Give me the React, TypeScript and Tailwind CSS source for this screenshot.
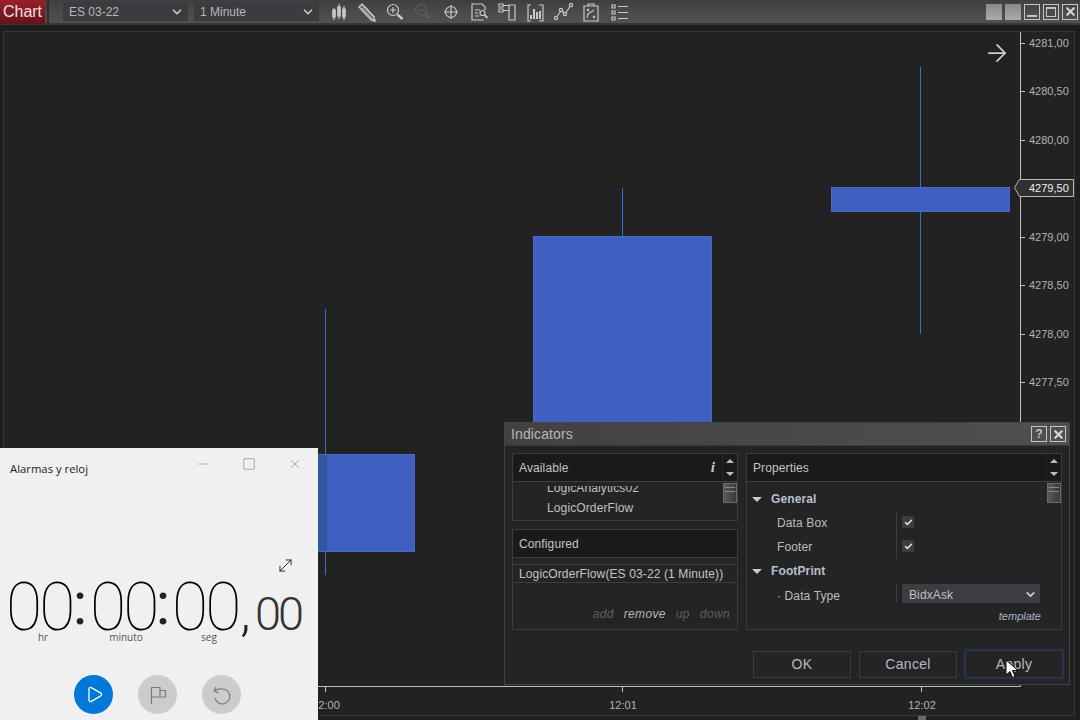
import * as React from "react";
import { ArrowRight, ChevronDown, Check, MoveDiagonal, Minus, Square, X, Play } from "lucide-react";

const prices = [
  { label: "4281,00", y: 43 },
  { label: "4280,50", y: 91 },
  { label: "4280,00", y: 140 },
  { label: "4279,00", y: 237 },
  { label: "4278,50", y: 285 },
  { label: "4278,00", y: 334 },
  { label: "4277,50", y: 382 },
];

const times = [
  { label: "12:00", x: 325 },
  { label: "12:01", x: 622 },
  { label: "12:02", x: 921 },
];

const sans = "font-['Liberation_Sans',Arial,sans-serif]";

function ToolIcon({ children }: { children: React.ReactNode }) {
  return (
    <div className="flex h-[24px] w-[28px] items-center justify-center">
      <svg width="24" height="24" viewBox="0 0 24 24" fill="none" stroke="#c8c8c8" strokeWidth="1.2">
        {children}
      </svg>
    </div>
  );
}

function Toolbar() {
  return (
    <div className="flex h-[25px] shrink-0 items-center border-b-2 border-[#383838] bg-gradient-to-b from-[#3f3f41] via-[#4a4a4a] to-[#505050]">
      <div className="flex h-[24px] w-[45px] items-center justify-center bg-gradient-to-b from-[#98202a] to-[#67121a] text-[16px] text-[#f0e0e0]">
        Chart
      </div>
      <div className="ml-[2px] h-full w-[2px] bg-[#2c2c2c]" />
      <div className="ml-[14px] flex h-[19px] w-[125px] items-center justify-between bg-[#3b3b40] pl-[6px] pr-[4px] text-[12px] text-[#b8b8b8]">
        ES 03-22
        <ChevronDown size={14} strokeWidth={3} className="text-[#c8c8c8]" />
      </div>
      <div className="ml-[6px] flex h-[19px] w-[125px] items-center justify-between bg-[#3b3b40] pl-[6px] pr-[4px] text-[12px] text-[#b8b8b8]">
        1 Minute
        <ChevronDown size={14} strokeWidth={3} className="text-[#c8c8c8]" />
      </div>
      <div className="ml-[6px] flex items-center">
        <ToolIcon>
          <path d="M7 8v12M12 4v15M17 6v14" />
          <path d="M5.800 10h2.400v7H5.800zM10.800 7h2.400v9h-2.400zM15.800 9h2.400v8h-2.400z" fill="#c8c8c8" />
        </ToolIcon>
        <ToolIcon>
          <path d="M7 4l12 13 1 4-4-1L4 7z" fill="#6a6a6a" strokeWidth="1.300" />
          <path d="M7 8l10 11M9.500 6l10 11" stroke="#e0e0e0" strokeWidth="0.800" />
          <path d="M17.500 19.500l2.500 1.500" strokeWidth="2" />
        </ToolIcon>
        <ToolIcon>
          <circle cx="10" cy="10" r="5.500" />
          <path d="M7 10h6M10 7v6" />
          <path d="M14.500 14.500l5 4.500" strokeWidth="2.400" />
        </ToolIcon>
        <ToolIcon>
          <g stroke="#5e5e5e">
            <circle cx="10" cy="10" r="5.500" />
            <path d="M7 10h6" />
            <path d="M14.500 14.500l5 4.500" strokeWidth="2.400" />
          </g>
        </ToolIcon>
        <ToolIcon>
          <circle cx="12" cy="12" r="5.500" />
          <path d="M12 5v14M5 12h14" />
        </ToolIcon>
        <ToolIcon>
          <path d="M18 10V7l-3-3H5v16h12" />
          <path d="M8 10h5M8 13h3M8 16h4" />
          <circle cx="15.500" cy="13" r="2.500" />
          <path d="M17.500 15l3 3" strokeWidth="1.800" />
        </ToolIcon>
        <ToolIcon>
          <path d="M14 5h6v15h-6zM4 4h4v3H4zM4 9h4v3H4zM8 5.500h6M8 10.500h6" />
        </ToolIcon>
        <ToolIcon>
          <path d="M8 5H5v16h3M16 5h4v16h-4" />
          <path d="M8 19v-4M11 19V9M14 19v-7M17 19v-8" strokeWidth="2" />
        </ToolIcon>
        <ToolIcon>
          <circle cx="5" cy="18" r="1.600" />
          <circle cx="10" cy="10" r="1.600" />
          <circle cx="14" cy="14" r="1.600" />
          <circle cx="20" cy="5" r="1.600" />
          <path d="M6 16.500l3.500-5M11 11l2 2M15 12.500l4-6" />
        </ToolIcon>
        <ToolIcon>
          <path d="M5 6h14v15H5zM9 6V4h6v2" />
          <path d="M8 9l2 2M10 9l-2 2M14 16l2 2M16 16l-2 2M8 18c0-4 2-5 7-8" />
        </ToolIcon>
        <ToolIcon>
          <path d="M5 5h3v3H5zM5 11h3v3H5zM5 17h3v3H5zM11 6.500h10M11 12.500h10M11 18.500h10" />
        </ToolIcon>
      </div>
      <div className="ml-auto mr-[2px] flex items-center gap-[3px]">
        <div className="h-[16px] w-[16px] bg-gradient-to-b from-[#8a8a8a] to-[#aaaaaa]" />
        <div className="h-[16px] w-[16px] bg-gradient-to-b from-[#8a8a8a] to-[#aaaaaa]" />
        <div className="flex h-[16px] w-[16px] items-end justify-center border border-[#c4c4c4] pb-[2px]">
          <div className="h-[2px] w-[10px] bg-[#c4c4c4]" />
        </div>
        <div className="flex h-[16px] w-[16px] items-center justify-center border border-[#c4c4c4]">
          <div className="h-[10px] w-[10px] border border-t-2 border-[#c4c4c4]" />
        </div>
        <div className="flex h-[16px] w-[16px] items-center justify-center border border-[#c4c4c4]">
          <X size={13} strokeWidth={4} className="text-[#d4d4d4]" />
        </div>
      </div>
    </div>
  );
}

function ChartLayer() {
  return (
    <div className="absolute inset-0">
      <svg width="1080" height="720" viewBox="0 0 1080 720" className="absolute left-0 top-0" fill="none">
        <path d="M1020.500 32V686.500H318" stroke="#c0c0c0" />
        {prices.map((p) => (
          <path key={p.label} d={`M1020 ${p.y + 0.5}h5`} stroke="#c0c0c0" />
        ))}
        <path d="M1020 188.500h5" stroke="#c0c0c0" />
        {times.map((t) => (
          <path key={t.label} d={`M${t.x + 0.5} 686v6`} stroke="#c0c0c0" />
        ))}
        <path d="M325.500 309V575" stroke="#4068d8" />
        <rect x="236.500" y="454.500" width="178" height="97" fill="#3f60c0" stroke="#4668d0" />
        <rect x="318" y="455" width="9" height="96" fill="#34569f" />
        <path d="M622.500 188V236" stroke="#4068d8" />
        <rect x="533.500" y="236.500" width="178" height="190" fill="#3f60c0" stroke="#4668d0" />
        <path d="M920.500 67V334" stroke="#4068d8" />
        <rect x="831.500" y="187.500" width="178" height="24" fill="#3f60c0" stroke="#4668d0" />
        <path d="M1014.500 187.500l5-8h54v17h-54z" fill="#303030" stroke="#b8b8b8" />
        <rect x="918" y="716" width="8" height="4" fill="#6a6a6a" />
      </svg>
      {prices.map((p) => (
        <span key={p.label} className="absolute left-[1029px] text-[11px] leading-[14px] text-[#b4b4b4]" style={{ top: p.y - 7 }}>
          {p.label}
        </span>
      ))}
      <span className="absolute left-[1029px] top-[181px] text-[11px] leading-[14px] text-[#f0f0f0]">4279,50</span>
      {times.map((t) => (
        <span key={t.label} className="absolute top-[698px] w-[40px] -translate-x-1/2 text-center text-[11px] leading-[14px] text-[#b4b4b4]" style={{ left: t.x + 1 }}>
          {t.label}
        </span>
      ))}
      <ArrowRight size={28} strokeWidth={1.500} className="absolute left-[983px] top-[39px] text-[#d0d0d0]" />
    </div>
  );
}

function ScrollButtons() {
  return (
    <div className="flex h-full w-[15px] flex-col items-center justify-center gap-[9px] border-l border-[#262626]">
      <div className="h-0 w-0 border-x-[4px] border-b-[4px] border-x-transparent border-b-[#bdbdbd]" />
      <div className="h-0 w-0 border-x-[4px] border-t-[4px] border-x-transparent border-t-[#bdbdbd]" />
    </div>
  );
}

function ScrollThumb() {
  return (
    <div className="absolute right-0 top-[1px] flex h-[20px] w-[14px] flex-col gap-[3px] border border-[#6a6a6a] bg-gradient-to-r from-[#5a5a5a] to-[#3a3a3a] px-[1px] pt-[3px]">
      <div className="h-px bg-[#8a8a8a]" />
      <div className="h-px bg-[#8a8a8a]" />
    </div>
  );
}

function PanelHeader({ title, children }: { title: string; children?: React.ReactNode }) {
  return (
    <div className="flex h-[28px] shrink-0 items-center justify-between border-b border-[#3e3e3e] bg-[#1a1a1a] pl-[6px] text-[12px] text-[#c4c4c4]">
      {title}
      {children}
    </div>
  );
}

function SectionRow({ title }: { title: string }) {
  return (
    <div className="flex h-[24px] items-center pl-[5px]">
      <div className="h-0 w-0 border-x-[5px] border-t-[5px] border-x-transparent border-t-[#c8c8c8]" />
      <span className="ml-[9px] font-bold text-[#b9c0cc]">{title}</span>
    </div>
  );
}

function CheckRow({ title }: { title: string }) {
  return (
    <div className="flex h-[24px] items-center">
      <span className="w-[149px] pl-[30px] text-[#bdbdbd]">{title}</span>
      <div className="flex h-full items-center border-l border-[#3c3c3c] pb-[2px] pl-[5px]">
        <div className="flex h-[12px] w-[12px] items-center justify-center bg-[#3c3c42]">
          <Check size={9} strokeWidth={4} className="text-[#e4e4e4]" />
        </div>
      </div>
    </div>
  );
}

function IndicatorsDialog() {
  return (
    <div className="absolute left-[504px] top-[422px] flex h-[263px] w-[566px] flex-col border border-[#434343] bg-[#242424] text-[12px] tracking-[0.12px]">
      <div className="flex h-[23px] shrink-0 items-center justify-between border-b border-[#393939] bg-gradient-to-r from-[#414141] to-[#505050] pl-[6px] pr-[3px] text-[14px] text-[#b8b8b8]">
        Indicators
        <div className="flex gap-[3px]">
          <div className="flex h-[16px] w-[16px] items-center justify-center border border-[#c4c4c4] text-[12px] font-bold leading-none text-[#c4c4c4]">?</div>
          <div className="flex h-[16px] w-[16px] items-center justify-center border border-[#c4c4c4]">
            <X size={13} strokeWidth={4} className="text-[#d8d8d8]" />
          </div>
        </div>
      </div>
      <div className="flex gap-[8px] pl-[7px] pt-[7px]">
        <div className="flex w-[226px] flex-col gap-[8px]">
          <div className="flex h-[68px] flex-col border border-[#3c3c3c]">
            <PanelHeader title="Available">
              <div className="flex h-full items-center gap-[7px]">
                <span className="font-['Liberation_Serif',serif] text-[15px] font-bold italic text-[#c8c8c8]">i</span>
                <ScrollButtons />
              </div>
            </PanelHeader>
            <div className="relative flex min-h-0 flex-1 flex-col pt-[4px]">
              <ScrollThumb />
              <div className="min-h-0 flex-1 overflow-hidden">
                <div className="mt-[-8px] pl-[34px] leading-[20px] text-[#c0c0c0]">
                  <div>LogicAnalytics02</div>
                  <div>LogicOrderFlow</div>
                </div>
              </div>
            </div>
          </div>
          <div className="flex h-[101px] flex-col border border-[#3c3c3c]">
            <PanelHeader title="Configured" />
            <div className="mt-[6px] flex h-[19px] items-center border-y border-[#3c3c3c] pl-[6px] text-[#c4c4c4]">
              LogicOrderFlow(ES 03-22 (1 Minute))
            </div>
            <div className="mt-auto flex justify-end gap-[10px] pb-[6px] pr-[7px] italic tracking-[0.35px] text-[#5e5e5e]">
              <span>add</span>
              <span className="text-[#b8b8b8]">remove</span>
              <span>up</span>
              <span>down</span>
            </div>
          </div>
        </div>
        <div className="flex h-[177px] w-[316px] flex-col border border-[#3c3c3c]">
          <PanelHeader title="Properties">
            <ScrollButtons />
          </PanelHeader>
          <div className="relative flex flex-1 flex-col pt-[5px]">
            <ScrollThumb />
            <SectionRow title="General" />
            <CheckRow title="Data Box" />
            <CheckRow title="Footer" />
            <SectionRow title="FootPrint" />
            <div className="flex h-[24px] items-start">
              <span className="w-[149px] pl-[30px] leading-[26px] text-[#bdbdbd]">· Data Type</span>
              <div className="flex h-[20px] items-start border-l border-[#3c3c3c] pl-[5px] pt-[1px]">
                <div className="flex h-[19px] w-[138px] items-center justify-between bg-[#3c3c42] pl-[7px] pr-[3px] pt-[2px] text-[#c0c0c0]">
                  BidxAsk
                  <ChevronDown size={13} strokeWidth={3} className="text-[#d0d0d0]" />
                </div>
              </div>
            </div>
            <div className="pr-[20px] pt-[1px] text-right text-[11px] italic tracking-normal text-[#a9b3c2]">template</div>
          </div>
        </div>
      </div>
      <div className="mt-[19px] flex items-center pl-[248px] text-[14px] tracking-[0.3px] text-[#b4bac4]">
        <button className="h-[27px] w-[98px] border border-[#3c3c3c]">OK</button>
        <button className="ml-[8px] h-[27px] w-[98px] border border-[#3c3c3c]">Cancel</button>
        <button className="ml-[7px] h-[30px] w-[100px] rounded-[2px] border-2 border-[#243456]">Apply</button>
      </div>
    </div>
  );
}

function ClockWindow() {
  return (
    <div className="absolute left-0 top-[448px] flex h-[272px] w-[318px] flex-col bg-[#f0f0f0] font-['Open_Sans',sans-serif] text-black">
      <div className="flex h-[32px] items-start justify-between pl-[10px] pr-[16px] pt-[13px]">
        <span className="text-[11.300px] leading-[16px] text-[#1c1c1c]">Alarmas y reloj</span>
        <div className="-mt-[4px] flex items-center gap-[32px] text-[#777]">
          <Minus size={14} strokeWidth={1} />
          <Square size={14} strokeWidth={1} />
          <X size={14} strokeWidth={1} />
        </div>
      </div>
      <div className="flex justify-end pr-[23px] pt-[76px]">
        <MoveDiagonal size={19} strokeWidth={1.200} className="text-[#222]" />
      </div>
      <div className="ml-[6px] mt-[10px] flex h-[46px] items-baseline font-['Roboto',sans-serif] text-[66px] font-thin leading-[46px] tracking-[-3px]">
        <span className="w-[64px] text-center">00</span>
        <span className="w-[20px] -translate-y-[6px] text-center text-[60px] font-normal tracking-normal text-[#222]">:</span>
        <span className="w-[64px] text-center">00</span>
        <span className="w-[18px] -translate-y-[6px] text-center text-[60px] font-normal tracking-normal text-[#222]">:</span>
        <span className="w-[64px] text-center">00</span>
        <span className="w-[19px] text-center text-[54px] font-light tracking-normal text-[#222]">,</span>
        <span className="text-[47px] font-light tracking-[-3px] text-[#333]">00</span>
      </div>
      <div className="ml-[11px] flex h-[12px] gap-[19px] text-[10px] leading-[12px] text-[#555]">
        <span className="w-[64px] text-center">hr</span>
        <span className="w-[64px] text-center">minuto</span>
        <span className="w-[64px] text-center">seg</span>
      </div>
      <div className="mt-[32px] flex justify-center gap-[25px] pr-[3px]">
        <div className="flex h-[39px] w-[39px] items-center justify-center rounded-full bg-[#0078d7]">
          <Play size={19} strokeWidth={1.600} className="ml-[2px] text-white" />
        </div>
        <div className="flex h-[39px] w-[39px] items-center justify-center rounded-full bg-[#cccccc]">
          <svg width="20" height="20" viewBox="0 0 20 20" fill="none" stroke="#7a7a7a" strokeWidth="1.200">
            <path d="M3.500 19V2.500h8.500V12H3.500M12 5.500h5.500v6.500H12" />
          </svg>
        </div>
        <div className="flex h-[39px] w-[39px] items-center justify-center rounded-full bg-[#cccccc]">
          <svg width="20" height="20" viewBox="0 0 20 20" fill="none" stroke="#7a7a7a" strokeWidth="1.200">
            <path d="M4 2l-2 4 4.500 2M2.500 6C5 4 8 3.500 11 4a7.500 7.500 0 1 1-8 9" />
          </svg>
        </div>
      </div>
    </div>
  );
}

export default function App() {
  return (
    <div className={`relative flex h-[720px] w-[1080px] flex-col overflow-hidden bg-[#1e1e1e] ${sans}`}>
      <Toolbar />
      <div className="ml-[3px] mt-[6px] h-[685px] w-[1072px] border border-[#383838] bg-[#222222]" />
      <ChartLayer />
      <IndicatorsDialog />
      <ClockWindow />
      <svg width="14" height="20" viewBox="0 0 14 20" className="absolute left-[1005px] top-[659px]">
        <path d="M1 1v15l4-3.500 2.500 6 2.500-1-2.500-6H13z" fill="#fff" stroke="#111" strokeWidth="1" />
      </svg>
    </div>
  );
}
